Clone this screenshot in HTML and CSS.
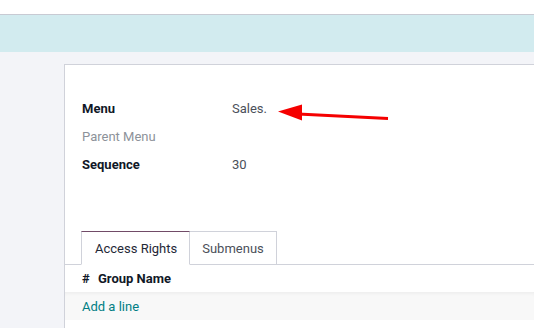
FILE: index.html
```html
<!DOCTYPE html>
<html lang="en">
<head>
    <meta charset="UTF-8">
    <meta name="viewport" content="width=device-width, initial-scale=1.0">
    <title>Menu</title>
    <link rel="stylesheet" href="styles.css">
</head>
<body>
    <div class="topbar"></div>
    <div class="banner"></div>
    <div class="page">
        <div class="sheet">
            <div class="fields">
                <div class="row">
                    <span class="label">Menu</span>
                    <span class="value">Sales.</span>
                </div>
                <div class="row">
                    <span class="label muted">Parent Menu</span>
                    <span class="value"></span>
                </div>
                <div class="row">
                    <span class="label">Sequence</span>
                    <span class="value">30</span>
                </div>
            </div>
            <ul class="tabs">
                <li class="tab active">Access Rights</li>
                <li class="tab">Submenus</li>
            </ul>
            <div class="list-head">
                <span class="hash">#</span>
                <span>Group Name</span>
            </div>
            <div class="add-row"><a href="#">Add a line</a></div>
        </div>
    </div>
    <!-- annotation arrow -->
    <svg class="arrow" width="534" height="328" viewBox="0 0 534 328">
        <line x1="388" y1="118.5" x2="298" y2="114" stroke="#f50000" stroke-width="3"/>
        <polygon points="278,111.5 302,104.5 302,120.5" fill="#f50000"/>
    </svg>
</body>
</html>
```

FILE: styles.css
```css
* {
    box-sizing: border-box;
}
body {
    margin: 0;
    font-family: Roboto, "Noto Sans", sans-serif;
    font-size: 13px;
    color: #374151;
    overflow: hidden;
    height: 328px;
    background: #f3f4f8;
}
.topbar {
    height: 15px;
    background: #fff;
    border-bottom: 1px solid #c8cad3;
}
.banner {
    height: 37px;
    background: #d2ebef;
}
.page {
    padding: 12px 0 0 64px;
}
.sheet {
    width: 470px;
    height: 264px;
    background: #fff;
    border: 1px solid #d0d2da;
    border-right: 0;
    border-bottom: 0;
}
.fields {
    padding: 29px 0 0 17px;
}
.row {
    display: flex;
    height: 28px;
    align-items: center;
}
.label {
    width: 150px;
    font-weight: 700;
    color: #111827;
}
.label.muted {
    font-weight: 400;
    color: #8d929a;
}
.value {
    color: #4b505a;
}
.tabs {
    list-style: none;
    margin: 53px 0 0;
    padding: 0 0 0 16px;
    display: flex;
    border-bottom: 1px solid #d0d2da;
}
.tab {
    height: 34px;
    padding: 0 12px;
    display: flex;
    align-items: center;
    color: #4b505a;
    border: 1px solid #d0d2da;
    border-left: 0;
    margin-bottom: -1px;
    background: #fff;
}
.tab.active {
    padding-left: 13px;
    color: #1f2937;
    border-left: 1px solid #d0d2da;
    border-top-color: #714b67;
    border-bottom-color: #fff;
}
.list-head {
    height: 27px;
    padding-left: 17px;
    display: flex;
    align-items: center;
    font-weight: 700;
    color: #111827;
}
.hash {
    width: 16px;
}
.add-row {
    height: 28px;
    padding-left: 17px;
    display: flex;
    align-items: center;
    background: #f8f8f8;
    box-shadow: inset 0 4px 4px -3px rgba(0, 0, 0, .06);
}
.add-row a {
    color: #017e84;
    text-decoration: none;
}
.arrow {
    position: absolute;
    top: 0;
    left: 0;
}
```
